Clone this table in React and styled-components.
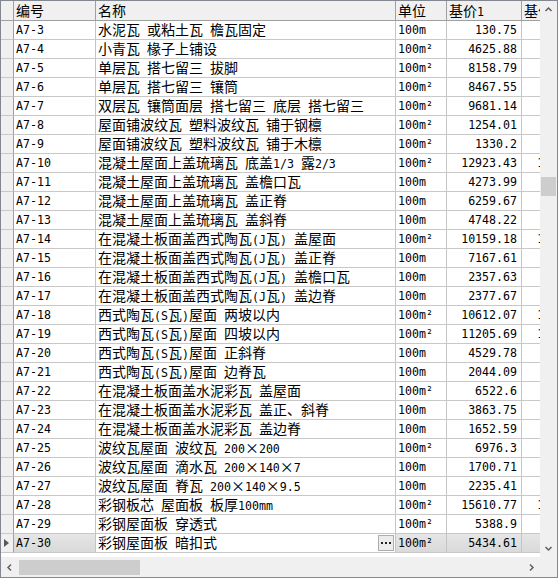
import React from 'react';
import styled, { createGlobalStyle } from 'styled-components';

const GlobalStyle = createGlobalStyle`
  * {
    box-sizing: border-box;
  }
  body {
    margin: 0;
    background: #fff;
    font-family: "Noto Sans CJK SC", "DejaVu Sans", sans-serif;
    font-size: 14px;
    color: #000;
  }
`;

const COLS = '13px 82px 300px 51px 75px 76px';

const rows = [
  ['A7-3', '水泥瓦 或粘土瓦 檐瓦固定', '100m', '130.75'],
  ['A7-4', '小青瓦 椽子上铺设', '100m²', '4625.88'],
  ['A7-5', '单层瓦 搭七留三 拔脚', '100m²', '8158.79'],
  ['A7-6', '单层瓦 搭七留三 镶筒', '100m²', '8467.55'],
  ['A7-7', '双层瓦 镶筒面层 搭七留三 底层 搭七留三', '100m²', '9681.14'],
  ['A7-8', '屋面铺波纹瓦 塑料波纹瓦 铺于钢檩', '100m²', '1254.01'],
  ['A7-9', '屋面铺波纹瓦 塑料波纹瓦 铺于木檩', '100m²', '1330.2'],
  ['A7-10', '混凝土屋面上盖琉璃瓦 底盖1/3 露2/3', '100m²', '12923.43'],
  ['A7-11', '混凝土屋面上盖琉璃瓦 盖檐口瓦', '100m', '4273.99'],
  ['A7-12', '混凝土屋面上盖琉璃瓦 盖正脊', '100m', '6259.67'],
  ['A7-13', '混凝土屋面上盖琉璃瓦 盖斜脊', '100m', '4748.22'],
  ['A7-14', '在混凝土板面盖西式陶瓦(J瓦) 盖屋面', '100m²', '10159.18'],
  ['A7-15', '在混凝土板面盖西式陶瓦(J瓦) 盖正脊', '100m', '7167.61'],
  ['A7-16', '在混凝土板面盖西式陶瓦(J瓦) 盖檐口瓦', '100m', '2357.63'],
  ['A7-17', '在混凝土板面盖西式陶瓦(J瓦) 盖边脊', '100m', '2377.67'],
  ['A7-18', '西式陶瓦(S瓦)屋面 两坡以内', '100m²', '10612.07'],
  ['A7-19', '西式陶瓦(S瓦)屋面 四坡以内', '100m²', '11205.69'],
  ['A7-20', '西式陶瓦(S瓦)屋面 正斜脊', '100m', '4529.78'],
  ['A7-21', '西式陶瓦(S瓦)屋面 边脊瓦', '100m', '2044.09'],
  ['A7-22', '在混凝土板面盖水泥彩瓦 盖屋面', '100m²', '6522.6'],
  ['A7-23', '在混凝土板面盖水泥彩瓦 盖正、斜脊', '100m', '3863.75'],
  ['A7-24', '在混凝土板面盖水泥彩瓦 盖边脊', '100m', '1652.59'],
  ['A7-25', '波纹瓦屋面 波纹瓦 200×200', '100m²', '6976.3'],
  ['A7-26', '波纹瓦屋面 滴水瓦 200×140×7', '100m', '1700.71'],
  ['A7-27', '波纹瓦屋面 脊瓦 200×140×9.5', '100m', '2235.41'],
  ['A7-28', '彩钢板芯 屋面板 板厚100mm', '100m²', '15610.77'],
  ['A7-29', '彩钢屋面板 穿透式', '100m²', '5388.9'],
  ['A7-30', '彩钢屋面板 暗扣式', '100m²', '5434.61'],
];

const Frame = styled.div`
  width: 558px;
  height: 578px;
  border: 1px solid #828790;
  display: grid;
  grid-template-columns: 539px 17px;
  grid-template-rows: 556px 20px;
  background: #fff;
`;

const Viewport = styled.div`
  overflow: hidden;
  background: #fff;
`;

const Row = styled.div`
  display: grid;
  grid-template-columns: ${COLS};
  width: max-content;
  height: ${(p) => (p.$header ? 20 : 19)}px;
`;

const HeadCell = styled.div`
  background: #f0f0f0;
  border-right: 1px solid #a0a0a0;
  border-bottom: 1px solid #a0a0a0;
  padding-left: 2px;
  line-height: 19px;
  white-space: nowrap;
  overflow: hidden;
`;

const RowHead = styled.div`
  background: #f0f0f0;
  border-right: 1px solid #a0a0a0;
  border-bottom: 1px solid #c8c8c8;
  display: flex;
  align-items: center;
  padding-left: 3px;
`;

const Pointer = styled.span`
  width: 0;
  height: 0;
  border-top: 4px solid transparent;
  border-bottom: 4px solid transparent;
  border-left: 5px solid #5a5a5a;
`;

const Cell = styled.div`
  border-right: 1px solid #c4c4c4;
  border-bottom: 1px solid #c8c8c8;
  line-height: 18px;
  white-space: pre;
  overflow: hidden;
  display: flex;
  align-items: center;
  justify-content: ${(p) => (p.$right ? 'flex-end' : 'flex-start')};
  padding: ${(p) => (p.$right ? '0 4px 0 0' : '0 0 0 2px')};
  background: ${(p) =>
    p.$current ? 'linear-gradient(#e6e6e6, #d9d9d9)' : '#fff'};
`;

const CellText = styled.span`
  flex: 1;
  overflow: hidden;
  white-space: pre;
`;

const Latin = styled.span`
  font-family: "DejaVu Sans Mono", "Liberation Mono", monospace;
  font-size: 11.6px;
`;

const EllipsisButton = styled.span`
  width: 16px;
  height: 16px;
  margin-right: 1px;
  border: 1px solid #adadad;
  background: #ececec;
  display: flex;
  align-items: center;
  justify-content: center;
  gap: 2px;
  flex-shrink: 0;

  i {
    width: 2px;
    height: 2px;
    background: #222;
  }
`;

const VBar = styled.div`
  background: #f0f0f0;
  display: flex;
  flex-direction: column;
`;

const HBar = styled.div`
  background: #f0f0f0;
  display: flex;
  align-items: center;
`;

const Corner = styled.div`
  background: #f0f0f0;
`;

const Arrow = styled.div`
  width: 17px;
  height: 17px;
  flex-shrink: 0;
  display: flex;
  align-items: center;
  justify-content: center;
`;

const Track = styled.div`
  flex: 1;
  display: flex;
  flex-direction: ${(p) => (p.$vertical ? 'column' : 'row')};
  align-items: center;
`;

const Thumb = styled.div`
  background: #cdcdcd;
  flex-shrink: 0;
  ${(p) =>
    p.$vertical
      ? 'width: 15px; margin-top: var(--pos); height: var(--len);'
      : 'height: 15px; margin-left: var(--pos); width: var(--len);'}
`;

function Chevron({ dir }) {
  const pts = {
    up: '1.5,6 4.5,3 7.5,6',
    down: '1.5,3 4.5,6 7.5,3',
    left: '6,1.5 3,4.5 6,7.5',
    right: '3,1.5 6,4.5 3,7.5',
  }[dir];
  return (
    <svg width="9" height="9" viewBox="0 0 9 9">
      <polyline points={pts} fill="none" stroke="#606060" strokeWidth="1.5" />
    </svg>
  );
}

function Mixed({ text }) {
  return text
    .split(/([\x00-\x7f²]+)/)
    .filter(Boolean)
    .map((part, i) =>
      /[\x00-\x7f²]/.test(part[0]) ? <Latin key={i}>{part}</Latin> : <span key={i}>{part}</span>
    );
}

export default function App() {
  const last = rows.length - 1;
  return (
    <>
      <GlobalStyle />
      <Frame>
        <Viewport>
          <Row $header>
            <HeadCell />
            <HeadCell>编号</HeadCell>
            <HeadCell>名称</HeadCell>
            <HeadCell>单位</HeadCell>
            <HeadCell>
              <Mixed text="基价1" />
            </HeadCell>
            <HeadCell>
              <Mixed text="基价2" />
            </HeadCell>
          </Row>
          {rows.map(([code, name, unit, price], i) => {
            const current = i === last;
            return (
              <Row key={code}>
                <RowHead>{current && <Pointer />}</RowHead>
                <Cell $current={current}>
                  <Latin>{code}</Latin>
                </Cell>
                <Cell>
                  <CellText>
                    <Mixed text={name} />
                  </CellText>
                  {current && (
                    <EllipsisButton>
                      <i />
                      <i />
                      <i />
                    </EllipsisButton>
                  )}
                </Cell>
                <Cell $current={current}>
                  <Mixed text={unit} />
                </Cell>
                <Cell $current={current} $right>
                  <Latin>{price}</Latin>
                </Cell>
                <Cell $current={current} $right>
                  <Latin>{price}</Latin>
                </Cell>
              </Row>
            );
          })}
        </Viewport>
        <VBar>
          <Arrow>
            <Chevron dir="up" />
          </Arrow>
          <Track $vertical>
            <Thumb $vertical style={{ '--pos': '159px', '--len': '19px' }} />
          </Track>
          <Arrow>
            <Chevron dir="down" />
          </Arrow>
        </VBar>
        <HBar>
          <Arrow>
            <Chevron dir="left" />
          </Arrow>
          <Track>
            <Thumb style={{ '--pos': '1px', '--len': '121px' }} />
          </Track>
          <Arrow>
            <Chevron dir="right" />
          </Arrow>
        </HBar>
        <Corner />
      </Frame>
    </>
  );
}
